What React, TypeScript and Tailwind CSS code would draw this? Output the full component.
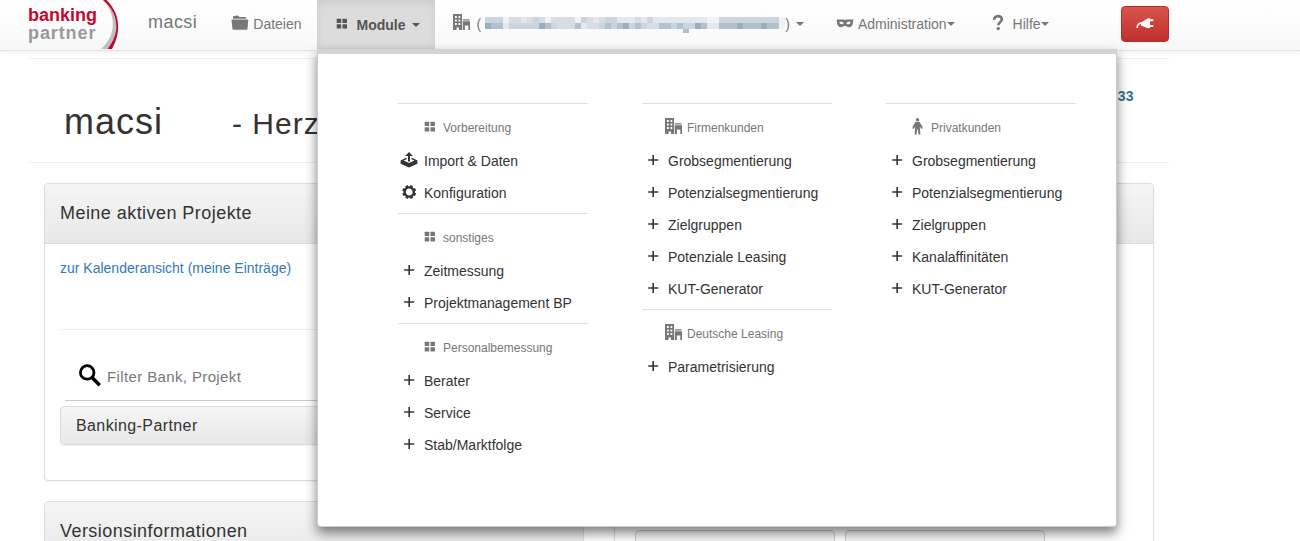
import React from 'react';

type IconName = 'modules' | 'building' | 'person' | 'plus' | 'import' | 'gear' | 'folder' | 'mask' | 'help' | 'plug' | 'search';

const Icon: React.FC<{ name: IconName; className?: string }> = ({ name, className = 'mb-0.5 size-[18px]' }) => {
    const shapes: Record<IconName, React.ReactNode> = {
        modules: (
            <>
                <rect x="3.700" y="3.700" width="4.500" height="4.300" rx="0.5" />
                <rect x="9.500" y="3.700" width="4.500" height="4.300" rx="0.5" />
                <rect x="3.700" y="9.300" width="4.500" height="4.300" rx="0.5" />
                <rect x="9.500" y="9.300" width="4.500" height="4.300" rx="0.5" />
            </>
        ),
        building: (
            <>
                <path fillRule="evenodd" d="M0 0h9v16H6v-2.500H3.500V16H0zM2 2v2h1.800V2zM5.500 2v2h1.800V2zM2 5.500v2h1.800v-2zM5.500 5.500v2h1.800v-2zM2 9v2h1.800V9zM5.500 9v2h1.800V9z" />
                <path d="M9.800 5.200h6.600v1.300H9.800zM9.800 7.300H17V16h-1.700v-4.600h-3.400V16H9.800z" />
            </>
        ),
        person: (
            <>
                <circle cx="8.500" cy="1.800" r="1.700" />
                <path d="M6.500 4h4l2.900 4.500v2.300h-1.300l-1.300-2.300.6 8H9.500L8.800 11.500h-.6l-.7 5H5.600l.6-8-1.300 2.300H3.600V8.500z" />
            </>
        ),
        plus: <path d="M8.400 4h1.600v4.300h4.200v1.500H10V14H8.400V9.800H4.200V8.300h4.200z" />,
        import: (
            <>
                <path d="M9 1l3.800 4H10v5.500H8V5H5.200z" />
                <path d="M6.500 6.500v1.700L3.600 9.600 9 12l5.400-2.400-2.900-1.400V6.500l5.900 3v3.200L9 16.400.6 12.700V9.500z" />
            </>
        ),
        gear: (
            <>
                <circle cx="9.200" cy="9" r="4.600" fill="none" stroke="currentColor" strokeWidth="2.400" />
                {[22, 67, 112, 157, 202, 247, 292, 337].map((angle) => (
                    <rect key={angle} x="7.800" y="2.100" width="2.800" height="2.400" transform={`rotate(${angle} 9.200 9)`} />
                ))}
            </>
        ),
        folder: <path d="M2 4.700V3q0-.7.700-.9L7 1.500l1.400 1.400h6.200l.7 1.800zM.5 5.500h16.800l-.8 9.300q-.1.900-.9.900H2.300q-.8 0-.9-.9z" />,
        mask: (
            <path
                fillRule="evenodd"
                d="M.8 5.200c3 .7 5.600-.4 8.200.8 2.600-1.200 5.200-.1 8.200-.8 0 4-.6 8-4 8-2 0-3.200-1.400-4.200-1.400s-2.200 1.400-4.200 1.400c-3.400 0-4-4-4-8zM3.400 8c.2 2.300 2.800 3 4.300 1.400C7 7.900 5 7.600 3.400 8zm11.200 0c-1.600-.4-3.600-.1-4.300 1.400 1.500 1.600 4.100.9 4.300-1.400z"
            />
        ),
        help: (
            <>
                <path d="M5.200 5.900C5 .9 12.800.9 12.800 5.300c0 3-3.500 2.900-3.500 6" fill="none" stroke="currentColor" strokeWidth="2.700" />
                <circle cx="9.200" cy="14.600" r="1.700" />
            </>
        ),
        plug: (
            <>
                <path d="M5 8.500L12.500 4v10.500L5 11.500z" />
                <path d="M12 4.500h2v9.500h-2zM14 5.200h3.300v2H14zM14 11h3.300v2H14z" />
                <path d="M6.500 9C3.500 9 1.200 10.500 1.200 14" fill="none" stroke="currentColor" strokeWidth="1.700" />
            </>
        ),
        search: (
            <>
                <circle cx="7.200" cy="6.600" r="5.300" fill="none" stroke="currentColor" strokeWidth="2.200" />
                <path d="M10.800 10.400l6.200 6.200" fill="none" stroke="currentColor" strokeWidth="2.700" />
            </>
        ),
    };
    return (
        <svg viewBox="0 0 18 18" fill="currentColor" className={`shrink-0 ${className}`} aria-hidden="true">
            {shapes[name]}
        </svg>
    );
};

const Caret: React.FC = () => <span className="border-x-4 border-t-4 border-x-transparent border-t-current" />;

const Logo: React.FC = () => (
    <a href="#" aria-label="banking partner" className="relative h-[50px] w-[91px]">
        <span className="flex flex-col pt-1.5 font-bold text-lg leading-[18px]">
            <span className="text-[#bf0a30]">banking</span>
            <span className="tracking-wider text-[#999999]">partner</span>
        </span>
        <svg viewBox="0 0 20 49" className="absolute right-0 top-0 h-[49px] w-5" aria-hidden="true">
            <path d="M4 0C17 14 18 35 2 49h8C22 33 21 14 6 0z" fill="#bfbfbf" />
            <path d="M4 0C21 14 21 34 8.500 49H13C22 33 22 14 7.500 0z" fill="#bf0a30" />
        </svg>
    </a>
);

// upper and lower tint of every blurred cell, 0 = lightest
const MOSAIC_TOP = '33302212320222203212331112131111111110033333333330';
const MOSAIC_BOTTOM = '54413333354322241223434534322443433541144454445440';
const TINTS = ['#f0f2f4', '#e3e8ec', '#d6dee4', '#cad5dc', '#b1c2ce', '#97afbf'];

const Mosaic: React.FC = () => (
    <svg width="300" height="16" shapeRendering="crispEdges" className="mt-0.5" aria-hidden="true">
        {Array.from(MOSAIC_TOP, (tint, i) => (
            <React.Fragment key={i}>
                <rect x={i * 6} y="0" width="6" height="6" fill={TINTS[Number(tint)]} />
                <rect x={i * 6} y="6" width="6" height="6" fill={TINTS[Number(MOSAIC_BOTTOM[i])]} />
            </React.Fragment>
        ))}
        <rect x="198" y="12" width="6" height="4" fill={TINTS[4]} />
    </svg>
);

interface MenuGroup {
    title: string;
    icon: IconName;
    items: { label: string; icon?: IconName }[];
}

const menuColumns: MenuGroup[][] = [
    [
        {
            title: 'Vorbereitung',
            icon: 'modules',
            items: [
                { label: 'Import & Daten', icon: 'import' },
                { label: 'Konfiguration', icon: 'gear' },
            ],
        },
        { title: 'sonstiges', icon: 'modules', items: [{ label: 'Zeitmessung' }, { label: 'Projektmanagement BP' }] },
        {
            title: 'Personalbemessung',
            icon: 'modules',
            items: [{ label: 'Berater' }, { label: 'Service' }, { label: 'Stab/Marktfolge' }],
        },
    ],
    [
        {
            title: 'Firmenkunden',
            icon: 'building',
            items: [
                { label: 'Grobsegmentierung' },
                { label: 'Potenzialsegmentierung' },
                { label: 'Zielgruppen' },
                { label: 'Potenziale Leasing' },
                { label: 'KUT-Generator' },
            ],
        },
        { title: 'Deutsche Leasing', icon: 'building', items: [{ label: 'Parametrisierung' }] },
    ],
    [
        {
            title: 'Privatkunden',
            icon: 'person',
            items: [
                { label: 'Grobsegmentierung' },
                { label: 'Potenzialsegmentierung' },
                { label: 'Zielgruppen' },
                { label: 'Kanalaffinitäten' },
                { label: 'KUT-Generator' },
            ],
        },
    ],
];

const MegaMenu: React.FC = () => (
    <div className="absolute left-[317px] top-[49px] z-30 w-[800px] min-h-[478px] rounded-b border border-t-[5px] border-[#cccccc] border-t-[#d3d3d3] bg-white pb-10 pl-20 pr-10 pt-[49px] text-sm shadow-[0_6px_12px_rgba(0,0,0,0.5)]">
        <div className="grid grid-cols-3 gap-x-[54px]">
            {menuColumns.map((groups, index) => (
                <div key={index}>
                    {groups.map((group) => (
                        <section key={group.title} className="border-t border-[#e0e0e0] pb-1 pt-[11px]">
                            <h3 className="flex h-[25px] items-center gap-1 pl-[23px] text-xs text-[#777777]">
                                <Icon name={group.icon} />
                                {group.title}
                            </h3>
                            <ul className="pt-[5px]">
                                {group.items.map((item) => (
                                    <li key={item.label}>
                                        <a href="#" className="flex h-8 items-center gap-1.5 pl-0.5 text-[#333333]">
                                            <Icon name={item.icon ?? 'plus'} />
                                            {item.label}
                                        </a>
                                    </li>
                                ))}
                            </ul>
                        </section>
                    ))}
                </div>
            ))}
        </div>
    </div>
);

const Header: React.FC = () => (
    <header className="relative z-20 h-[51px] border-b border-[#e4e4e4] bg-linear-to-b from-white to-[#f8f8f8] text-sm text-[#777777] shadow-[0_1px_5px_rgba(0,0,0,0.08)]">
        <nav className="flex h-full max-w-[1169px] items-start pl-7">
            <Logo />
            <a href="#" className="ml-[29px] pt-3 text-lg leading-5 tracking-wide">
                macsi
            </a>
            <a href="#" className="ml-[34px] flex h-12 items-center gap-1">
                <Icon name="folder" />
                Dateien
            </a>
            <button type="button" className="ml-[15px] flex h-[49px] w-[118px] items-center justify-end gap-1.5 bg-[#dcdcdc] pr-[15px] font-bold text-[#555555] shadow-[inset_0_3px_9px_rgba(0,0,0,0.075)]">
                <Icon name="modules" />
                Module
                <Caret />
            </button>
            <button type="button" aria-label="Bank" className="ml-[18px] flex h-12 items-center gap-1.5">
                <Icon name="building" />
                <span className="flex items-center">
                    <span className="mr-1">(</span>
                    <Mosaic />
                    <span>)</span>
                </span>
                <Caret />
            </button>
            <button type="button" className="ml-8 flex h-12 items-center">
                <Icon name="mask" className="mb-0.5 mr-1 size-[18px]" />
                Administration
                <Caret />
            </button>
            <button type="button" className="ml-[34px] flex h-12 items-center">
                <Icon name="help" className="mb-0.5 mr-1.5 size-[18px]" />
                Hilfe
                <Caret />
            </button>
            <button type="button" aria-label="Abmelden" className="ml-auto mt-1.5 flex h-9 w-12 items-center justify-center rounded border border-[#b92c28] bg-linear-to-b from-[#d9534f] to-[#c12e2a] text-white">
                <Icon name="plug" />
            </button>
        </nav>
    </header>
);

const PanelHeading: React.FC<{ children?: React.ReactNode }> = ({ children }) => (
    <h2 className="flex h-[60px] items-center border-b border-[#dddddd] bg-linear-to-b from-[#f5f5f5] to-[#e8e8e8] px-[15px] pb-0.5 text-lg tracking-wide">{children}</h2>
);

const Panel: React.FC<{ title?: string; children?: React.ReactNode }> = ({ title, children }) => (
    <section className="overflow-hidden rounded border border-[#dddddd] bg-white shadow-xs">
        <PanelHeading>{title}</PanelHeading>
        {children}
    </section>
);

const ProjectsPanel: React.FC = () => (
    <Panel title="Meine aktiven Projekte">
        <div className="px-[15px] pb-[35px] pt-3.5 text-sm">
            <a href="#" className="leading-5 text-[#337ab7]">
                zur Kalenderansicht (meine Einträge)
            </a>
            <hr className="mt-[51px] border-[#eeeeee]" />
            <label className="ml-[5px] mt-[22px] flex h-[49px] items-center gap-1.5 border-b border-[#cccccc] pl-[13px]">
                <Icon name="search" className="mb-0.5 size-[23px] text-black" />
                <input type="text" aria-label="Filter" placeholder="Filter Bank, Projekt" className="w-full pt-0.5 text-[15px] tracking-wide outline-none placeholder:text-[#777777]" />
            </label>
            <div className="mt-[5px] flex h-[39px] items-center rounded border border-[#dddddd] bg-linear-to-b from-[#f5f5f5] to-[#e8e8e8] px-[15px] text-base tracking-wide shadow-xs">Banking-Partner</div>
        </div>
    </Panel>
);

const App: React.FC = () => {
    return (
        <div className="relative h-screen overflow-hidden bg-white font-['Liberation_Sans',Arial,sans-serif] text-[#333333]">
            <Header />
            <MegaMenu />
            <main className="ml-3.5 max-w-[1170px] px-[15px] pt-[7px]">
                <div className="flex h-[105px] items-start justify-between border-y border-[#eeeeee] px-[35px]">
                    <h1 className="flex items-baseline gap-[69px] pt-[43px] text-4xl leading-10 tracking-[1px]">
                        macsi <small className="text-3xl tracking-[1px]">- Herz</small>
                    </h1>
                    <a href="#" className="pt-[27px] text-sm font-bold leading-5 tracking-wide text-[#31708f]">
                        33
                    </a>
                </div>
                <div className="mt-5 grid grid-cols-2 gap-[30px] px-[15px]">
                    <div className="flex flex-col gap-5">
                        <ProjectsPanel />
                        <Panel title="Versionsinformationen" />
                    </div>
                    <Panel>
                        <div className="grid grid-cols-[200px_200px] gap-2.5 px-5 pt-[286px]">
                            <div className="h-24 rounded border border-[#cccccc] bg-[#f5f5f5]" />
                            <div className="h-24 rounded border border-[#cccccc] bg-[#f5f5f5]" />
                        </div>
                    </Panel>
                </div>
            </main>
        </div>
    );
};

export default App;
